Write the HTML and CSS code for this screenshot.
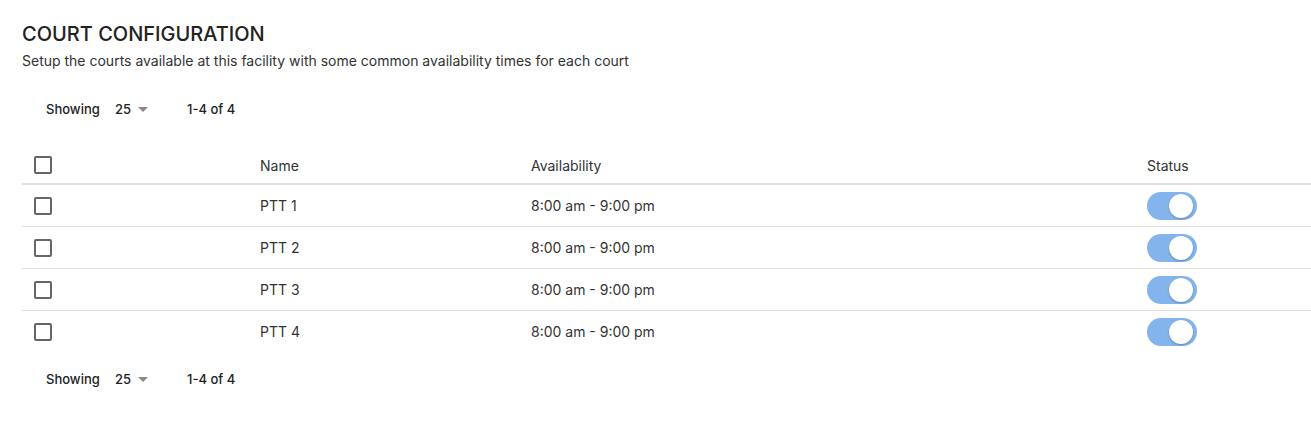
FILE: index.html
```html
<!DOCTYPE html>
<html>
<head>
<meta charset="utf-8">
<link rel="stylesheet" href="styles.css">
</head>
<body>
<div class="page">
  <h1 class="title">COURT CONFIGURATION</h1>
  <p class="subtitle">Setup the courts available at this facility with some common availability times for each court</p>

  <div class="pager">
    <span class="lbl">Showing</span>
    <span class="size">25 <svg class="caret" width="10" height="5" viewBox="0 0 10 5"><path d="M0 0h10L5 5z" fill="#8a8a8a"/></svg></span>
    <span class="range">1-4 of 4</span>
  </div>

  <div class="table">
    <div class="row head">
      <div class="c-check"><span class="box"></span></div>
      <div class="c-name">Name</div>
      <div class="c-avail">Availability</div>
      <div class="c-status">Status</div>
    </div>
    <div class="row">
      <div class="c-check"><span class="box"></span></div>
      <div class="c-name">PTT 1</div>
      <div class="c-avail">8:00 am - 9:00 pm</div>
      <div class="c-status"><span class="toggle"><span class="knob"></span></span></div>
    </div>
    <div class="row">
      <div class="c-check"><span class="box"></span></div>
      <div class="c-name">PTT 2</div>
      <div class="c-avail">8:00 am - 9:00 pm</div>
      <div class="c-status"><span class="toggle"><span class="knob"></span></span></div>
    </div>
    <div class="row">
      <div class="c-check"><span class="box"></span></div>
      <div class="c-name">PTT 3</div>
      <div class="c-avail">8:00 am - 9:00 pm</div>
      <div class="c-status"><span class="toggle"><span class="knob"></span></span></div>
    </div>
    <div class="row last">
      <div class="c-check"><span class="box"></span></div>
      <div class="c-name">PTT 4</div>
      <div class="c-avail">8:00 am - 9:00 pm</div>
      <div class="c-status"><span class="toggle"><span class="knob"></span></span></div>
    </div>
  </div>

  <div class="pager bottom">
    <span class="lbl">Showing</span>
    <span class="size">25 <svg class="caret" width="10" height="5" viewBox="0 0 10 5"><path d="M0 0h10L5 5z" fill="#8a8a8a"/></svg></span>
    <span class="range">1-4 of 4</span>
  </div>
</div>
</body>
</html>
```
FILE: styles.css
```css
html, body {
  margin: 0;
  padding: 0;
  background: #fff;
}
body {
  font-family: Inter, "Noto Sans", sans-serif;
  color: #222;
}
.page {
  padding: 22px 0 0 22px;
}
.title {
  margin: 0;
  font-size: 20px;
  font-weight: 500;
  line-height: 24px;
  color: #222;
  letter-spacing: 0;
}
.subtitle {
  margin: 6px 0 0 0;
  font-size: 14px;
  line-height: 18px;
  color: #333;
}
.pager {
  display: flex;
  align-items: center;
  height: 20px;
  margin: 29px 0 0 24px;
  font-size: 13px;
  color: #222;
  font-weight: 500;
}
.pager .lbl { width: 69px; }
.pager .size {
  display: flex;
  align-items: center;
  gap: 7px;
  width: 72px;
}
.caret { margin-top: 1px; }
.pager.bottom { margin-top: 17px; }

.table {
  margin-top: 28px;
  font-size: 14px;
  color: #333;
}
.row {
  display: grid;
  grid-template-columns: 238px 271px 616px 1fr;
  align-items: center;
  height: 41px;
  border-bottom: 1px solid #e0e0e0;
}
.row.head {
  height: 36px;
  border-bottom: 2px solid #e0e0e0;
}
.row.last { border-bottom: none; }
.c-check { padding-left: 12px; display: flex; align-items: center; }
.box {
  width: 14px;
  height: 14px;
  border: 2px solid #666;
  border-radius: 2px;
}
.c-status { display: flex; align-items: center; }
.toggle {
  position: relative;
  width: 50px;
  height: 28px;
  border-radius: 14px;
  background: #83b4ec;
}
.knob {
  position: absolute;
  right: 4px;
  top: 2px;
  width: 24px;
  height: 24px;
  border-radius: 50%;
  background: #fff;
  box-shadow: 0 1px 2px rgba(0,0,0,0.25);
}
```
